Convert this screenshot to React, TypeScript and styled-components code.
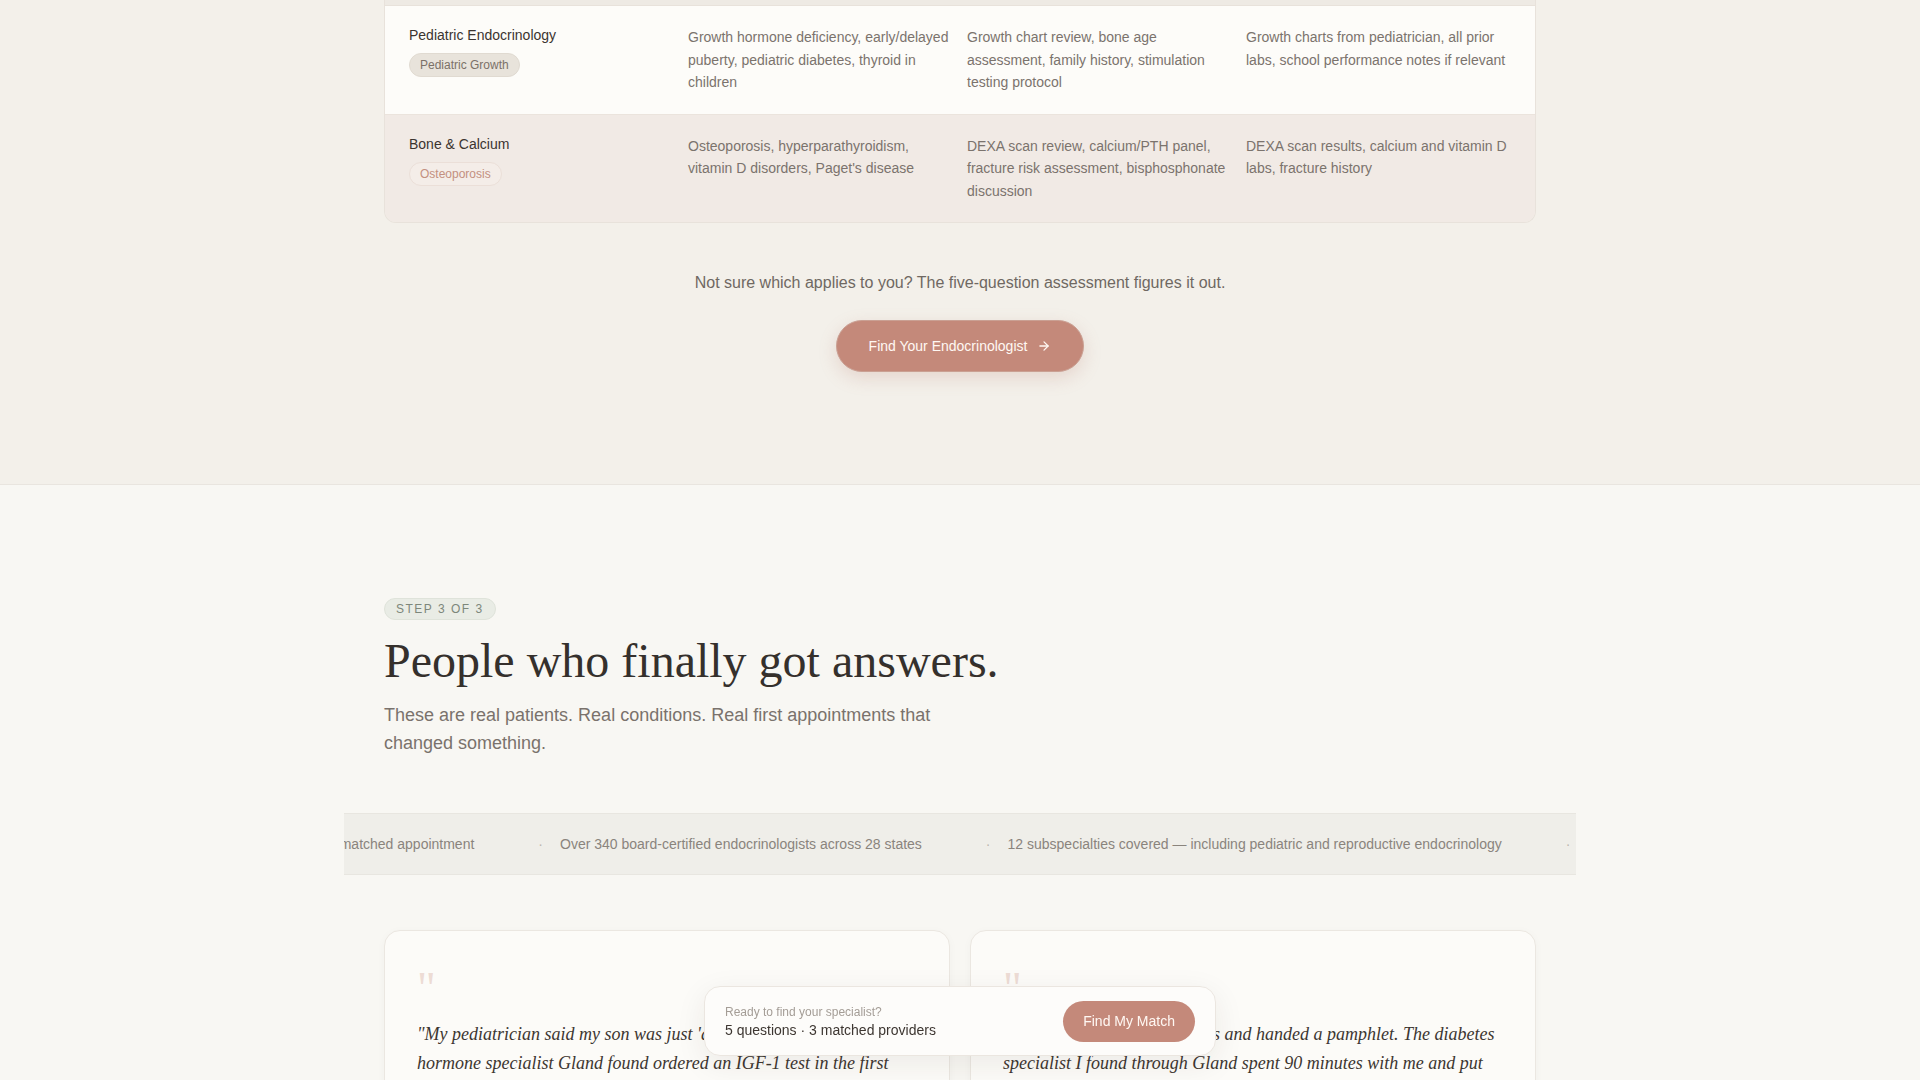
import React from "react";
import styled, { createGlobalStyle } from "styled-components";
import { ArrowRight } from "lucide-react";

const GlobalStyle = createGlobalStyle`
  * { box-sizing: border-box; }
  body {
    margin: 0;
    background: #f8f7f3;
    font-family: "Liberation Sans", Arial, sans-serif;
    color: #3b3430;
  }
`;

const rows = [
  {
    id: 1,
    title: "Pediatric Endocrinology",
    tag: "Pediatric Growth",
    tone: "neutral",
    conditions: "Growth hormone deficiency, early/delayed puberty, pediatric diabetes, thyroid in children",
    visit: "Growth chart review, bone age assessment, family history, stimulation testing protocol",
    bring: "Growth charts from pediatrician, all prior labs, school performance notes if relevant",
  },
  {
    id: 2,
    title: "Bone & Calcium",
    tag: "Osteoporosis",
    tone: "rose",
    conditions: "Osteoporosis, hyperparathyroidism, vitamin D disorders, Paget's disease",
    visit: "DEXA scan review, calcium/PTH panel, fracture risk assessment, bisphosphonate discussion",
    bring: "DEXA scan results, calcium and vitamin D labs, fracture history",
  },
];

const ticker = [
  "Average 9 days from assessment to a matched appointment",
  "Over 340 board-certified endocrinologists across 28 states",
  "12 subspecialties covered — including pediatric and reproductive endocrinology",
  "Most insurance plans accepted",
];

const stories = [
  "\"My pediatrician said my son was just 'a late bloomer.' The growth hormone specialist Gland found ordered an IGF-1 test in the first week, and we finally had a real answer.\"",
  "\"I was diagnosed in 8 minutes and handed a pamphlet. The diabetes specialist I found through Gland spent 90 minutes with me and put together a plan I could actually follow.\"",
];

const App = () => {
  return (
    <>
      <GlobalStyle />
      <Upper>
        <Wrap>
          <Table>
            <PrevTail />
            {rows.map((row) => (
              <Row key={row.id} $alt={row.id % 2 === 0}>
                <div>
                  <RowTitle>{row.title}</RowTitle>
                  <Tag $tone={row.tone}>{row.tag}</Tag>
                </div>
                <Cell>{row.conditions}</Cell>
                <Cell>{row.visit}</Cell>
                <Cell>{row.bring}</Cell>
              </Row>
            ))}
          </Table>
          <Prompt>Not sure which applies to you? The five-question assessment figures it out.</Prompt>
          <CtaRow>
            <CtaButton>
              Find Your Endocrinologist
              <ArrowRight size={14} strokeWidth={2.2} />
            </CtaButton>
          </CtaRow>
        </Wrap>
      </Upper>

      <Lower>
        <Wrap>
          <Step>Step 3 of 3</Step>
          <Heading>People who finally got answers.</Heading>
          <Sub>These are real patients. Real conditions. Real first appointments that changed something.</Sub>
        </Wrap>
        <Strip>
          <Track>
            <Lead>
              <TickText>{ticker[0]}</TickText>
              <Dot>·</Dot>
            </Lead>
            {ticker.slice(1).map((t) => (
              <React.Fragment key={t}>
                <TickText>{t}</TickText>
                <Dot>·</Dot>
              </React.Fragment>
            ))}
          </Track>
        </Strip>
        <Wrap>
          <Cards>
            {stories.map((s) => (
              <Card key={s}>
                <QuoteMark>"</QuoteMark>
                <QuoteText>{s}</QuoteText>
                <Who>Verified patient</Who>
              </Card>
            ))}
          </Cards>
        </Wrap>
      </Lower>

      <Floating>
        <div>
          <FloatSmall>Ready to find your specialist?</FloatSmall>
          <FloatMain>5 questions · 3 matched providers</FloatMain>
        </div>
        <MatchButton>Find My Match</MatchButton>
      </Floating>
    </>
  );
};
export default App;

const Upper = styled.section`
  background: #f3f0ea;
  border-bottom: 1px solid #e9e5df;
  padding-bottom: 112px;
`;

const Wrap = styled.div`
  width: 1152px;
  margin: 0 auto;
`;

const Table = styled.div`
  border: 1px solid #e8e2db;
  border-top: none;
  border-radius: 0 0 12px 12px;
  overflow: hidden;
`;

const PrevTail = styled.div`
  height: 6px;
  background: #eeeae4;
  border-bottom: 1px solid #e8e2db;
`;

const Row = styled.div<{ $alt: boolean }>`
  display: grid;
  grid-template-columns: repeat(4, 1fr);
  column-gap: 14px;
  padding: 20px 24px;
  background: ${(p) => (p.$alt ? "#f1eae5" : "#fdfcf9")};
  & + & {
    border-top: 1px solid #ebe4dd;
  }
`;

const RowTitle = styled.div`
  font-size: 14px;
  line-height: 18px;
  color: #3b3430;
`;

const Tag = styled.span<{ $tone: string }>`
  display: inline-block;
  margin-top: 9px;
  padding: 3px 10px;
  border-radius: 999px;
  font-size: 12px;
  line-height: 16px;
  background: ${(p) => (p.$tone === "rose" ? "#f4ede8" : "#e8e3db")};
  border: 1px solid ${(p) => (p.$tone === "rose" ? "#ebdfd8" : "#e0dad1")};
  color: ${(p) => (p.$tone === "rose" ? "#c39080" : "#7b7168")};
`;

const Cell = styled.p`
  margin: 0;
  font-size: 14px;
  line-height: 22.5px;
  color: #7b736d;
`;

const Prompt = styled.p`
  margin: 49px 0 0;
  text-align: center;
  font-size: 16px;
  line-height: 22px;
  color: #6f6862;
`;

const CtaRow = styled.div`
  display: flex;
  justify-content: center;
  margin-top: 26px;
`;

const CtaButton = styled.button`
  display: flex;
  align-items: center;
  gap: 10px;
  height: 52px;
  padding: 0 32px;
  border: 1px solid #caa093;
  border-radius: 999px;
  background: #c4897a;
  color: #fff8f3;
  font-family: "Liberation Sans", Arial, sans-serif;
  font-size: 14px;
  box-shadow: 0 6px 18px rgba(180, 120, 105, 0.22);
  cursor: pointer;
`;

const Lower = styled.section`
  background: #f8f7f3;
  padding: 113px 0 200px;
`;

const Step = styled.span`
  display: inline-block;
  padding: 3px 11px;
  border-radius: 999px;
  background: #e9ece5;
  border: 1px solid #dfe3da;
  color: #7d877b;
  font-size: 12px;
  line-height: 14px;
  letter-spacing: 1.5px;
  text-transform: uppercase;
`;

const Heading = styled.h2`
  margin: 13px 0 0;
  font-family: "Liberation Serif", "Times New Roman", serif;
  font-weight: 400;
  font-size: 48px;
  line-height: 55px;
  color: #35302c;
`;

const Sub = styled.p`
  margin: 13px 0 0;
  max-width: 560px;
  font-size: 18px;
  line-height: 28px;
  color: #7a726c;
`;

const Strip = styled.div`
  width: 1232px;
  margin: 56px auto 0;
  height: 62px;
  background: #efeee9;
  border-top: 1px solid #e8e6e0;
  border-bottom: 1px solid #e8e6e0;
  overflow: hidden;
  display: flex;
  align-items: center;
`;

const Track = styled.div`
  display: flex;
  align-items: center;
  white-space: nowrap;
`;

const Lead = styled.div`
  flex: 0 0 216px;
  width: 216px;
  min-width: 0;
  display: flex;
  justify-content: flex-end;
  align-items: center;
`;

const TickText = styled.span`
  font-size: 14px;
  color: #8a847d;
  padding-right: 64px;
  flex-shrink: 0;
`;

const Dot = styled.span`
  font-size: 14px;
  color: #bcb6af;
  padding-right: 17px;
  flex-shrink: 0;
`;

const Cards = styled.div`
  display: grid;
  grid-template-columns: 1fr 1fr;
  gap: 20px;
  margin-top: 55px;
`;

const Card = styled.div`
  background: #fcfbf8;
  border: 1px solid #ebe7e1;
  border-radius: 16px;
  padding: 32px 32px 40px;
  box-shadow: 0 2px 10px rgba(60, 45, 35, 0.03);
`;

const QuoteMark = styled.div`
  margin-top: 6px;
  font-family: "Liberation Serif", "Times New Roman", serif;
  font-size: 46px;
  line-height: 40px;
  height: 40px;
  color: #eddcd5;
`;

const QuoteText = styled.p`
  margin: 11px 0 0;
  font-family: "Liberation Serif", "Times New Roman", serif;
  font-style: italic;
  font-size: 18px;
  line-height: 28.8px;
  color: #3d3631;
`;

const Who = styled.div`
  margin-top: 24px;
  font-size: 13px;
  color: #8a847d;
`;

const Floating = styled.div`
  position: fixed;
  left: 50%;
  bottom: 24px;
  transform: translateX(-50%);
  width: 512px;
  height: 70px;
  padding: 0 20px;
  display: flex;
  align-items: center;
  justify-content: space-between;
  background: #fdfcfa;
  border: 1px solid #ebe6e0;
  border-radius: 16px;
  box-shadow: 0 8px 30px rgba(50, 35, 25, 0.08);
`;

const FloatSmall = styled.div`
  font-size: 12px;
  line-height: 16px;
  color: #a49d96;
`;

const FloatMain = styled.div`
  margin-top: 1px;
  font-size: 14px;
  line-height: 18px;
  color: #3d3631;
`;

const MatchButton = styled.button`
  height: 41px;
  padding: 0 20px;
  border: none;
  border-radius: 999px;
  background: #c4897a;
  color: #fff8f3;
  font-family: "Liberation Sans", Arial, sans-serif;
  font-size: 14px;
  cursor: pointer;
`;
